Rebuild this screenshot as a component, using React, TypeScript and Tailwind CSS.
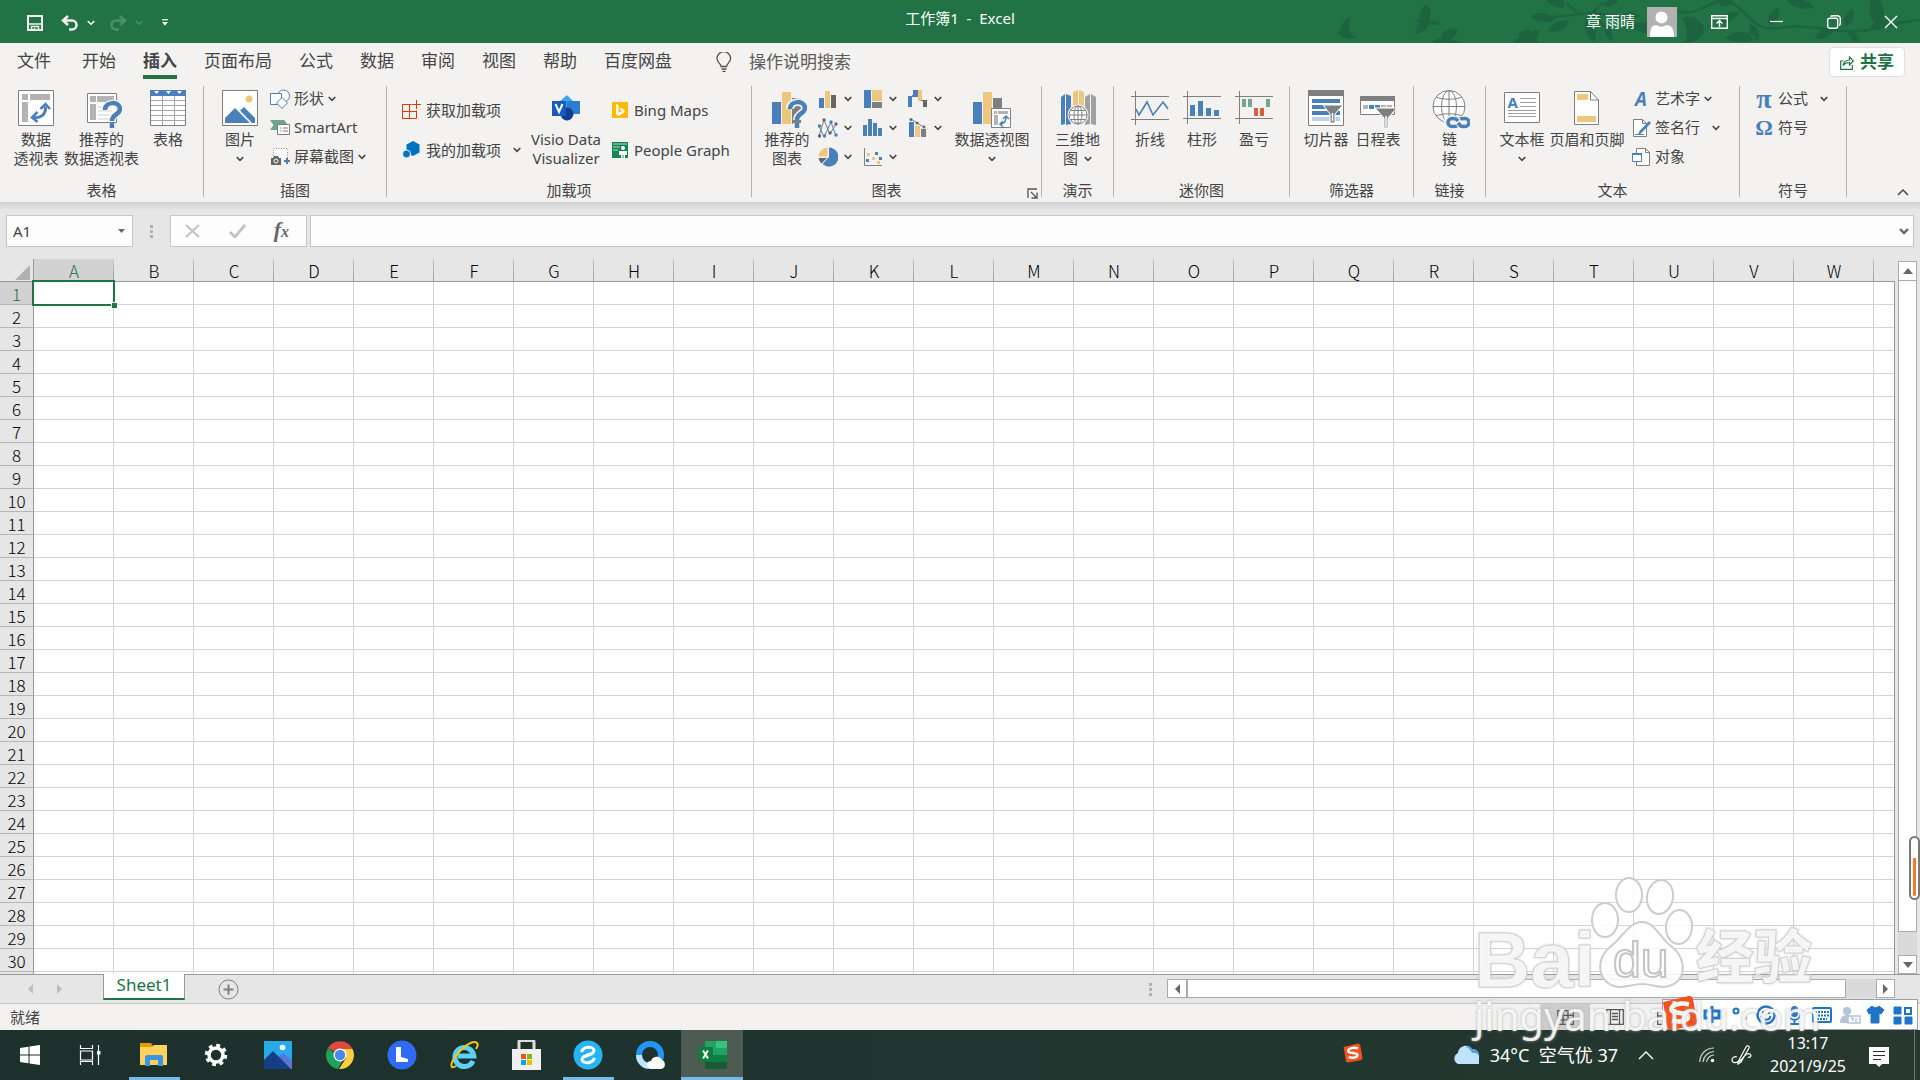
import type { ReactNode } from "react";

const BLUE = "#4a80b9";
const GOLD = "#edc77e";
const GRAY = "#7f7f7f";

const TABS = ["开始", "插入", "页面布局", "公式", "数据", "审阅", "视图", "帮助", "百度网盘"];
const COLUMNS = "ABCDEFGHIJKLMNOPQRSTUVW".split("");
const ROWS = Array.from({ length: 30 }, (_, i) => i + 1);

type IconProps = { w?: number; h?: number; children: ReactNode };

const Icon = ({ w = 20, h = 20, children }: IconProps) => (
  <svg width={w} height={h} viewBox={`0 0 ${w} ${h}`} fill="none" className="shrink-0" aria-hidden="true">
    {children}
  </svg>
);

const Big = ({ children }: { children: ReactNode }) => (
  <Icon w={40} h={40}>
    {children}
  </Icon>
);

const Chevron = () => (
  <Icon w={8} h={6}>
    <path d="M0.7 1 4 4.3 7.3 1" stroke="#444" strokeWidth="1.6" />
  </Icon>
);

const BigButton = ({
  icon,
  lines,
  chevron,
  className,
}: {
  icon: ReactNode;
  lines: string[];
  chevron?: "below" | "inline";
  className: string;
}) => (
  <button className={`flex flex-col items-center shrink-0 pt-1.5 leading-[19px] whitespace-nowrap ${className}`}>
    {icon}
    {lines.map((line, i) => (
      <span key={line} className="flex items-center gap-1.5">
        {line}
        {chevron === "inline" && i === lines.length - 1 && <Chevron />}
      </span>
    ))}
    {chevron === "below" && (
      <span className="flex items-center h-[19px]">
        <Chevron />
      </span>
    )}
  </button>
);

const SmallButton = ({
  icon,
  label,
  chevron,
  className = "h-[29px] gap-1",
}: {
  icon: ReactNode;
  label: string;
  chevron?: "near" | "far";
  className?: string;
}) => (
  <button className={`flex items-center shrink-0 whitespace-nowrap ${className}`}>
    {icon}
    <span>{label}</span>
    {chevron === "near" && <Chevron />}
    {chevron === "far" && (
      <span className="pl-2">
        <Chevron />
      </span>
    )}
  </button>
);

const Group = ({
  title,
  className,
  launcher,
  children,
}: {
  title: string;
  className: string;
  launcher?: boolean;
  children: ReactNode;
}) => (
  <>
    <section className={`flex flex-col shrink-0 ${className}`} aria-label={title}>
      <div className="flex h-[95px]">{children}</div>
      <div className="flex items-center h-[22px]">
        <span className="flex-1 text-center">{title}</span>
        {launcher && (
          <button className="w-5 pl-1.5 pt-1.5" aria-label="图表选项">
            <Icon w={11} h={11}>
              <path d="M1 10V1h9M4 4l5 5M10 4.5V10H4.5" stroke="#555" strokeWidth="1.3" />
            </Icon>
          </button>
        )}
      </div>
    </section>
    <div className="w-px h-[111px] mt-0.5 shrink-0 bg-[#b3b0ad]" />
  </>
);

/* ---------- ribbon icons ---------- */

const PivotIcon = () => (
  <Big>
    <path d="M2.500 .5h35v35h-35z" fill="#fff" stroke={GRAY} />
    <path d="M6 4h6v6H6zM14 4h20v6H14zM6 12h6v20H6z" fill="#b3b3b3" />
    <path d="M17 27.500c8 1 13-3 12.500-11" stroke={BLUE} strokeWidth="3" />
    <path d="m21.500 22-5.500 5.500 5.500 4.500M24.500 19l5-5 4.500 5" stroke={BLUE} strokeWidth="2.500" />
  </Big>
);

const RecommendedPivotIcon = () => (
  <Big>
    <path d="M5.500 3.500h29v29h-29z" fill="#fff" stroke={GRAY} />
    <path d="M8 6h6v6H8zM15 6h17v6H15zM8 14h6v16H8z" fill="#b3b3b3" />
    <path d="M16 17h14M16 21h14M16 25h14M16 29h14" stroke="#d0d0d0" />
    <path d="M23 20c0-9 15-9 15-1 0 6-8 5-8 12M30 34v5" stroke="#f3f2f1" strokeWidth="7" />
    <path d="M23 20c0-9 15-9 15-1 0 6-8 5-8 12M30 33v5" stroke={BLUE} strokeWidth="4.500" />
  </Big>
);

const TableIcon = () => (
  <Big>
    <path d="M2.500 .5h35v35h-35z" fill="#fff" stroke={GRAY} />
    <path d="M2 0h36v6H2z" fill={BLUE} />
    <path d="M6 1h5l-2.500 3zM18 1h5l-2.500 3zM29 1h5l-2.500 3z" fill="#fff" />
    <path d="M14.500 6v29M26.500 6v29M3 10.500h34M3 15.500h34M3 20.500h34M3 25.500h34M3 30.500h34" stroke="#a6a6a6" />
  </Big>
);

const PictureIcon = () => (
  <Big>
    <path d="M2.500 .5h35v35h-35z" fill="#fff" stroke={GRAY} />
    <circle cx="29" cy="9" r="3.500" fill={GOLD} />
    <path d="M5 33v-5l10-10 15 15zM20 20.500l4-3.500 11 11v5h-3z" fill={BLUE} />
  </Big>
);

const ShapesIcon = () => (
  <Icon>
    <circle cx="13.500" cy="7" r="6" fill="#fff" stroke={BLUE} />
    <path d="M.5 4.500h11v11H.5z" fill="#fff" stroke={BLUE} />
    <path d="m12 8.500 5.500 5.500-5.500 5.500L6.500 14z" fill="#fff" stroke={BLUE} />
  </Icon>
);

const SmartArtIcon = () => (
  <Icon>
    <path d="M0 2h14l4 5-3 5H0l3.500-5z" fill="#6ba58c" />
    <path d="M7.500 6.500h12v10h-12z" fill="#fff" stroke={GRAY} />
    <path d="M10 10h1.500M10 13h1.500M13 10h5M13 13h5" stroke={GRAY} />
  </Icon>
);

const ScreenshotIcon = () => (
  <Icon>
    <path d="M3.500 9V1.500h14V14" fill="#fff" stroke="#888" strokeDasharray="1 1.500" />
    <path d="M1 11h2l1-2h4l1 2h2v7H1z" fill="#666" />
    <circle cx="6" cy="14" r="2" fill="#666" stroke="#fff" />
    <path d="M17 11v6M14 14h6" stroke={BLUE} strokeWidth="2" />
  </Icon>
);

const GetAddinsIcon = () => (
  <Icon>
    <path d="M.5 4.500h7v14h-7zM.5 11.500h14v7H.5zM7.500 18.500v-14h2M14.500 11.500v-1M7.500 11.500h7" stroke="#d83b01" />
    <path d="M14.500 0v9M10 4.500h9" stroke="#d83b01" />
  </Icon>
);

const MyAddinsIcon = () => (
  <Icon>
    <path d="m11 1 6.500 3.500v8L11 16l-6.500-3.500V4.500z" fill="#0072c6" />
    <circle cx="4.500" cy="14" r="4" fill="#0072c6" stroke="#f3f2f1" />
  </Icon>
);

const VisioIcon = () => (
  <Big>
    <path d="m21 5 7 7-7 7-8-7z" fill="#41a5ee" />
    <path d="M21 11h13v13H21z" fill="#2b7cd3" />
    <circle cx="21" cy="24" r="6.500" fill="#103f91" />
    <path d="M6 11h14v15H6z" fill="#185abd" />
    <path d="m9.500 14 3.500 8 3.500-8" stroke="#fff" strokeWidth="2" />
  </Big>
);

const BingIcon = () => (
  <Icon w={16} h={16}>
    <path d="M0 0h16v16H0z" fill="#ffb900" />
    <path d="M4 2v10l2.500 2 6-3.500V7.500L7.500 5.500l1 3 1.500.5-3.500 2V3z" fill="#fff" />
  </Icon>
);

const PeopleGraphIcon = () => (
  <Icon w={16} h={16}>
    <path d="M0 0h16v16H0z" fill="#13864f" />
    <path d="M1 2h14M1 5h7M1 8h5" stroke="#b9dccb" />
    <circle cx="11" cy="6" r="2" fill="#fff" />
    <path d="M7 9h8v4h-2v3h-1.500v-3h-1v3H9v-3H7z" fill="#fff" />
  </Icon>
);

const RecommendedChartIcon = () => (
  <Big>
    <path d="M5 12h9v22H5z" fill={BLUE} />
    <path d="M15 2h9v32h-9z" fill={GOLD} />
    <path d="M25 8h9v26h-9z" fill={GRAY} />
    <path d="M23 19c0-9 15-9 15-1 0 6-8 5-8 12M30 33v6" stroke="#f3f2f1" strokeWidth="8" />
    <path d="M23 19c0-9 15-9 15-1 0 6-8 5-8 12M30 33v5" stroke={BLUE} strokeWidth="4.500" />
  </Big>
);

const PivotChartIcon = () => (
  <Big>
    <path d="M1 12h9v22H1z" fill={BLUE} />
    <path d="M11 2h9v32h-9z" fill={GOLD} />
    <path d="M21 8h9v10h-9z" fill={GRAY} />
    <path d="M19.500 18.500h19v19h-19z" fill="#fff" stroke={GRAY} />
    <path d="M22 21h3v3h-3zM26 21h10v3H26zM22 25h4v10h-4z" fill="#b3b3b3" />
    <path d="M28 34c4 0 6-3 6-7M31 31l-3 3 3 3M31 29l3-3 3 3" stroke={BLUE} strokeWidth="1.500" />
  </Big>
);

const MINI_CHARTS: { name: string; art: ReactNode }[] = [
  {
    name: "柱形图",
    art: (
      <>
        <path d="M1 9h5v10H1z" fill={BLUE} />
        <path d="M7 2h5v17H7z" fill={GOLD} />
        <path d="M13 6h5v13h-5z" fill="#666" />
      </>
    ),
  },
  {
    name: "层次结构图",
    art: (
      <>
        <path d="M1 1h7v18H1z" fill={BLUE} />
        <path d="M9 1h10v11H9z" fill={GOLD} />
        <path d="M9 13h10v6H9z" fill={GRAY} />
      </>
    ),
  },
  {
    name: "瀑布图",
    art: (
      <>
        <path d="M0 7h4v11H0zM5 1h5v7H5zM4 6h2v2H4z" fill={BLUE} />
        <path d="M10 1h4v11h-4z" fill={GOLD} />
        <path d="M15 11h4v7h-4zM13 11h3v1h-3z" fill="#666" />
      </>
    ),
  },
  {
    name: "折线图",
    art: (
      <>
        <path d="M1 18 6 2l6 14 6-10" stroke={GRAY} />
        <path d="m1 8 5 11 7-15 5 14" stroke={BLUE} />
        <g fill="#666">
          <circle cx="1.500" cy="18" r="1.700" />
          <circle cx="6" cy="2" r="1.700" />
          <circle cx="12" cy="15" r="1.700" />
          <circle cx="18" cy="6" r="1.700" />
        </g>
        <g fill={BLUE}>
          <circle cx="1.500" cy="8" r="1.700" />
          <circle cx="6.500" cy="18" r="1.700" />
          <circle cx="13" cy="4" r="1.700" />
          <circle cx="18" cy="17" r="1.700" />
        </g>
      </>
    ),
  },
  { name: "直方图", art: <path d="M0 7h4v11H0zM5 1h4v17H5zM10 5h4v13h-4zM15 10h4v8h-4z" fill={BLUE} /> },
  {
    name: "组合图",
    art: (
      <>
        <path d="M1 4h5v15H1z" fill={BLUE} />
        <path d="M7 8h5v11H7z" fill={GOLD} />
        <path d="M13 11h5v8h-5z" fill={GRAY} />
        <path d="m3 1 6 4 7 4" stroke={GRAY} />
        <circle cx="3" cy="1.500" r="1.500" fill="#666" />
        <circle cx="9" cy="5" r="1.500" fill="#666" />
        <circle cx="16" cy="9" r="1.500" fill="#666" />
      </>
    ),
  },
  {
    name: "饼图",
    art: (
      <>
        <path d="M11 .5A9.500 9.500 0 1 1 4.500 17L11 10z" fill={BLUE} />
        <path d="M9.500 .5V9.500H.5A9.500 9.500 0 0 1 9.500 .5z" fill={GOLD} />
        <path d="M.5 11h8.500L3.500 16.500A9.500 9.500 0 0 1 .5 11z" fill="#666" />
      </>
    ),
  },
  {
    name: "散点图",
    art: (
      <>
        <path d="M1.500 1v17.500H19" stroke={GRAY} />
        <path d="M3 12h3v3H3zM12 5h3v3h-3zM16 10h3v3h-3z" fill={BLUE} />
        <path d="M4 6h3v3H4zM9 10h3v3H9zM14 14h3v3h-3z" fill={GOLD} />
      </>
    ),
  },
];

const Map3dIcon = () => (
  <Big>
    <path d="M3 7l4-3v30l-4 1zM8 4l5 2v28l-5 1z" fill={BLUE} />
    <path d="m15 2 5-2v16l-5 2zM21 0l5 2v16l-5-2z" fill={GOLD} />
    <path d="m27 7 5-3v30l-5 1zM33 4l5 3v28l-5-1z" fill="#a0a0a0" />
    <circle cx="20" cy="25" r="10.500" fill="#f3f2f1" />
    <circle cx="20" cy="25" r="9" fill="#fff" stroke={GRAY} />
    <ellipse cx="20" cy="25" rx="4" ry="9" stroke={GRAY} />
    <path d="M11 25h18M12.500 20.500h15M12.500 29.500h15M20 16v18" stroke={GRAY} />
  </Big>
);

const SparkLineIcon = () => (
  <Big>
    <path d="M1 6.500h38M1 29.500h38M5.500 1v34" stroke={GRAY} />
    <path d="m6 19 3 6 8-13 6 13 10-13 5 7" stroke={BLUE} strokeWidth="1.600" />
  </Big>
);

const SparkColumnIcon = () => (
  <Big>
    <path d="M1 6.500h38M1 28.500h38M5.500 1v33" stroke={GRAY} />
    <path d="M8 15h5v11H8zM16 11h5v15h-5zM24 18h5v8h-5zM32 20h5v6h-5z" fill={BLUE} />
  </Big>
);

const SparkWinLossIcon = () => (
  <Big>
    <path d="M1 6.500h38M1 28.500h38M5.500 1v33" stroke={GRAY} />
    <path d="M8 9h4v8H8zM14 9h4v8h-4zM32 9h4v8h-4z" fill="#72a794" />
    <path d="M20 18h4v8h-4zM26 18h4v8h-4z" fill="#d9603b" />
  </Big>
);

const SlicerIcon = () => (
  <Big>
    <path d="M2.500 .5h35v35h-35z" fill="#fff" stroke={GRAY} />
    <path d="M2 0h36v6H2z" fill={GRAY} />
    <path d="M6 9h28v4H6zM6 15h28v4H6zM6 21h28v4H6z" fill={BLUE} />
    <path d="M6 27h28v4H6z" fill="#bed3ea" />
    <path d="M17 15h20l-8 9v9h-5v-9z" fill={GRAY} stroke="#fff" />
    <path d="M26.500 23v8" stroke="#fff" strokeWidth="1.500" />
  </Big>
);

const TimelineIcon = () => (
  <Big>
    <path d="M2.500 6.500h34v18h-34z" fill="#fff" stroke={GRAY} />
    <path d="M2 6h35v5H2z" fill={GRAY} />
    <path d="M5 15h5v4H5zM23 15h5v2h-5zM29 15h5v2h-5z" fill="#b3b3b3" />
    <path d="M11 15h5v4h-5zM17 15h5v4h-5z" fill={BLUE} />
    <path d="M17 18h22l-9 10v10h-4V28z" fill={GRAY} stroke="#fff" />
    <path d="M28 26v11" stroke="#fff" strokeWidth="1.500" />
  </Big>
);

const LinkIcon = () => (
  <Big>
    <circle cx="19" cy="16.500" r="16" fill="#fff" stroke={GRAY} />
    <ellipse cx="19" cy="16.500" rx="7.500" ry="16" stroke={GRAY} />
    <path d="M3 16.500h32M19 .5v32M6 7c7 3 19 3 26 0M6 26c7-3 19-3 26 0" stroke={GRAY} />
    <path d="M20 26h16a6 6 0 0 1 0 13H20a6 6 0 0 1 0-13z" fill="#f3f2f1" />
    <path
      d="M27 36c-1 .5-3 .5-5 .5a4 4 0 0 1 0-8c4 0 4 0 6 2.500M30 29c1-.5 3-.5 5-.5a4 4 0 0 1 0 8c-4 0-4 0-7-3.500"
      stroke={BLUE}
      strokeWidth="3.500"
    />
  </Big>
);

const TextBoxIcon = () => (
  <Big>
    <path d="M2.500 2.500h35v30h-35z" fill="#fff" stroke={GRAY} />
    <text x="5.500" y="18" fontSize="15" fontWeight="700" fill={BLUE}>
      A
    </text>
    <path d="M18 8.500h16M18 12.500h16M18 16.500h16M6 20.500h28M6 23.500h28M6 26.500h28" stroke="#a0a0a0" />
  </Big>
);

const HeaderFooterIcon = () => (
  <Big>
    <path d="M7.500 1.500h16l8 8.500v24.500h-24z" fill="#fff" stroke={GRAY} />
    <path d="M23.500 1.500V10h8" stroke={GRAY} />
    <path d="M10 4h11v6H10zM10 26h19v6H10z" fill={GOLD} />
  </Big>
);

const SignatureIcon = () => (
  <Icon>
    <path d="M2.500 1.500h9l4 4v13h-13z" fill="#fff" stroke={GRAY} />
    <path d="M11.500 1.500v4h4" stroke={GRAY} />
    <path d="m7 17 1.500-4L18 3l2 2-9.500 10z" fill={BLUE} />
    <path d="M4 16.500h9" stroke={BLUE} />
  </Icon>
);

const ObjectIcon = () => (
  <Icon>
    <path d="M5.500 1.500h9l4 4v13h-13z" fill="#fff" stroke={GRAY} />
    <path d="M14.500 1.500v4h4" stroke={GRAY} />
    <path d="M1.500 6.500h9v8h-9z" fill="#fff" stroke={BLUE} />
    <path d="M1 7h10" stroke={BLUE} strokeWidth="2" />
  </Icon>
);

const Glyph = ({ char, className }: { char: string; className: string }) => (
  <span className={`text-center text-[#4a80b9] font-bold leading-5 shrink-0 ${className}`} aria-hidden="true">
    {char}
  </span>
);

/* ---------- window parts ---------- */

const TitleArt = () => (
  <svg width="590" height="43" viewBox="0 0 590 43" className="absolute top-0 right-0" fill="#1e633f" aria-hidden="true">
    <path d="M7 33c4 0 4-13 14-16-3 7-2 15 1 18l5 1-2 2-7 1-5-2z" />
    <path d="M84 19l6 1c-1-8 3-16 7-15 4 3 4 10 3 16l9 1v3l-10-1c-3 7-8 9-14 10 1-6 3-9 4-11z" />
    <path d="M102 41l9-3c0-6 7-10 17-9-1 6-6 8-7 11l8 2v1h-24zM184 40l8-3 6 6h-12z" />
    <path d="M189 33c5-5 10-4 13-1 2-3 6-3 8 0l-2 5 -2 2 2 4h-19z" />
    <path d="M212 16c15 3 30-2 46-3s28 5 48 4M250 15l-14-12M262 13l10-10M262 13l18 20" stroke="#1e633f" fill="none" strokeWidth="2" />
    <path d="M200 17c8-6 18-4 26 1-7 7-19 4-26-1zM234 8c-8 0-16-4-18-8h18zM238 20c0 9-9 12-20 12 1-8 9-11 20-12zM256 15c10 5 12 16 8 27-8-6-11-15-8-27zM272 5c4-5 9-6 16-5-3 6-9 8-16 5zM290 16c7-5 14-5 20 0-7 5-14 5-20 0zM275 24c6 2 8 8 7 17-6-4-9-9-7-17zM300 26c10-6 24-6 30 4-10 5-22 4-30-4z" />
    <path d="M345 10c10 5 20 2 32-4s20-8 32 2c14 12 16 22 40 20 40-6 60 10 100 0 20-5 30-8 41-8" stroke="#1e633f" fill="none" strokeWidth="2.500" />
    <path d="M352 18c12-4 24 4 22 14-4 8-12 11-20 11 5-8 4-16-2-25zM385 0h18c-4 8-10 9-18 0zM408 12c-4 10-12 12-20 10 4-8 11-11 20-10zM420 24c-2 9 0 14 8 17 3-8 0-14-8-17zM440 26c-4-9 0-14 8-18 3 8 0 14-8 18zM395 38c10-8 24-7 32 0-10 6-22 5-32 0zM505 28c-10-2-17 2-20 11 9 1 16-3 20-11zM515 27c-3-8 0-14 8-18 3 8 0 14-8 18zM518 29c7 1 11 6 11 14-8-2-12-7-11-14zM540 28c5-9 14-11 20-9-3 8-11 11-20 9zM548 26c-9-6-10-15-7-26h9c6 10 5 18-2 26zM456 0c8 8 16 10 28 8-4-7-12-9-18-8z" />
  </svg>
);

const TitleBar = () => (
  <header className="relative flex items-center h-[43px] shrink-0 bg-[#217346] text-white overflow-hidden">
    <TitleArt />
    <div className="relative flex items-center flex-1 pt-0.5">
      <button className="ml-[27px]" aria-label="保存">
        <Icon w={16} h={16}>
          <path d="M1 1h14v14H1z" stroke="#f3f2f1" strokeWidth="2" />
          <path d="M2 9h12M4.500 16v-4.500h7V16M7.500 13v3" stroke="#f3f2f1" strokeWidth="1.500" />
        </Icon>
      </button>
      <button className="ml-4.5" aria-label="撤消">
        <Icon w={18} h={16}>
          <path d="M2 5.500h9a4.500 4.500 0 0 1 0 9H8M7 1 2 5.500 7 10" stroke="#f3f2f1" strokeWidth="2.500" />
        </Icon>
      </button>
      <button className="ml-2" aria-label="撤消列表">
        <Icon w={8} h={6}>
          <path d="M.7 1 4 4.300 7.300 1" stroke="#fff" strokeWidth="1.500" />
        </Icon>
      </button>
      <button className="ml-3.5" aria-label="恢复">
        <Icon w={18} h={16}>
          <path d="M16 5.500H7a4.500 4.500 0 0 0 0 9h3M11 1l5 4.500L11 10" stroke="#4d9069" strokeWidth="2.500" />
        </Icon>
      </button>
      <button className="ml-2" aria-label="恢复列表">
        <Icon w={8} h={6}>
          <path d="M.7 1 4 4.300 7.300 1" stroke="#4d9069" strokeWidth="1.500" />
        </Icon>
      </button>
      <button className="ml-[19px]" aria-label="自定义快速访问工具栏">
        <Icon w={6} h={7}>
          <path d="M0 .7h6" stroke="#fff" strokeWidth="1.200" />
          <path d="M0 3h6L3 6.500z" fill="#fff" />
        </Icon>
      </button>
    </div>
    <h1 className="relative pb-1.5 whitespace-pre">工作簿1  -  Excel</h1>
    <div className="relative flex items-center justify-end flex-1">
      <span className="mr-3">章 雨晴</span>
      <button className="mr-[13px]" aria-label="账户">
        <Icon w={30} h={30}>
          <path d="M0 0h30v30H0z" fill="#b1b1b1" />
          <circle cx="14.500" cy="10.500" r="6" fill="#fff" />
          <path d="M3 30c0-9 2-12 7-12 2 2 7 2 9 0 6 0 8 4 8 12z" fill="#fff" />
        </Icon>
      </button>
      <button className="flex justify-center w-[58px]" aria-label="功能区显示选项">
        <Icon w={17} h={14}>
          <path d="M.7 .7h15.600v12.600H.7zM1 3.500h15M8.500 12V6M5.500 8.500l3-3 3 3" stroke="#fff" strokeWidth="1.400" />
        </Icon>
      </button>
      <button className="flex justify-center w-[57px]" aria-label="最小化">
        <Icon w={13} h={14}>
          <path d="M0 6.500h13" stroke="#fff" strokeWidth="1.200" />
        </Icon>
      </button>
      <button className="flex justify-center w-[57px]" aria-label="向下还原">
        <Icon w={14} h={14}>
          <rect x=".7" y="3.200" width="10" height="10" rx="2" stroke="#fff" strokeWidth="1.400" />
          <path d="M3.500 1.500C4 1 5 .7 6 .7h4A3.300 3.300 0 0 1 13.300 4v4c0 1-.3 2-1 2.500" stroke="#fff" strokeWidth="1.400" />
        </Icon>
      </button>
      <button className="flex justify-center w-[58px]" aria-label="关闭">
        <Icon w={14} h={14}>
          <path d="m1 1 12 12M13 1 1 13" stroke="#fff" strokeWidth="1.400" />
        </Icon>
      </button>
    </div>
  </header>
);

const TabRow = () => (
  <nav className="flex h-[41px] pl-[17px] pr-[15px] text-[17px]">
    <button className="h-9 mr-[31px]">文件</button>
    <div className="flex gap-[27px]">
      {TABS.map((tab) => (
        <button
          key={tab}
          className={`h-9 pt-1 border-b-4 leading-7 whitespace-nowrap ${
            tab === "插入" ? "border-[#217346] font-bold" : "border-transparent"
          }`}
        >
          {tab}
        </button>
      ))}
    </div>
    <label className="flex items-center h-[38px] ml-11 gap-[17px]">
      <Icon w={16} h={20}>
        <path d="M5 14.500c0-3-4-4-4-8a6.800 6.800 0 0 1 13.600 0c0 4-4 5-4 8zM5.500 17h5M6.500 19.300h3" stroke="#555" strokeWidth="1.300" />
      </Icon>
      <input className="w-48 bg-transparent outline-none placeholder:text-[#5c5a58]" placeholder="操作说明搜索" aria-label="操作说明搜索" />
    </label>
    <button className="flex items-center justify-center gap-1.5 w-[76px] h-[30px] mt-1 ml-auto bg-white border border-[#e1dfdd] rounded text-[#217346] font-bold">
      <Icon w={14} h={15}>
        <path d="M3.500 6H.7v8.300h11.600V10M3 10.500c.5-3 2.500-5.500 6.500-5.500V2l4 4-4 4V7.500C6 7.500 4.500 8.500 3 10.500z" stroke="#217346" strokeWidth="1.200" />
      </Icon>
      共享
    </button>
  </nav>
);

const Ribbon = () => (
  <div className="flex h-[118px] overflow-hidden">
    <Group title="表格" className="w-[203px]">
      <BigButton className="ml-2 w-14" icon={<PivotIcon />} lines={["数据", "透视表"]} />
      <BigButton className="w-[75px]" icon={<RecommendedPivotIcon />} lines={["推荐的", "数据透视表"]} />
      <BigButton className="w-[58px]" icon={<TableIcon />} lines={["表格"]} />
    </Group>
    <Group title="插图" className="w-[182px]">
      <BigButton className="ml-1.5 w-[60px]" icon={<PictureIcon />} lines={["图片"]} chevron="below" />
      <div className="flex flex-col items-start">
        <SmallButton icon={<ShapesIcon />} label="形状" chevron="near" />
        <SmallButton icon={<SmartArtIcon />} label="SmartArt" />
        <SmallButton icon={<ScreenshotIcon />} label="屏幕截图" chevron="near" />
      </div>
    </Group>
    <Group title="加载项" className="w-[364px]">
      <div className="flex flex-col items-start w-[141px] pl-[15px] pt-1.5">
        <SmallButton className="h-10 gap-1" icon={<GetAddinsIcon />} label="获取加载项" />
        <SmallButton className="h-10 gap-1" icon={<MyAddinsIcon />} label="我的加载项" chevron="far" />
      </div>
      <BigButton className="w-[76px]" icon={<VisioIcon />} lines={["Visio Data", "Visualizer"]} />
      <div className="flex flex-col items-start pl-2 pt-1.5">
        <SmallButton className="h-10 gap-1.5" icon={<BingIcon />} label="Bing Maps" />
        <SmallButton className="h-10 gap-1.5" icon={<PeopleGraphIcon />} label="People Graph" />
      </div>
    </Group>
    <Group title="图表" className="w-[289px]" launcher>
      <BigButton className="ml-2 w-[54px]" icon={<RecommendedChartIcon />} lines={["推荐的", "图表"]} />
      <div className="grid grid-cols-3 content-start w-[139px] pl-1">
        {MINI_CHARTS.map(({ name, art }) => (
          <button key={name} className="flex items-center gap-1.5 h-[29px]" aria-label={name}>
            <Icon>{art}</Icon>
            <Chevron />
          </button>
        ))}
      </div>
      <BigButton className="w-[78px]" icon={<PivotChartIcon />} lines={["数据透视图"]} chevron="below" />
    </Group>
    <Group title="演示" className="w-[71px]">
      <BigButton className="w-full" icon={<Map3dIcon />} lines={["三维地", "图"]} chevron="inline" />
    </Group>
    <Group title="迷你图" className="w-[175px]">
      <BigButton className="ml-2.5 w-[52px]" icon={<SparkLineIcon />} lines={["折线"]} />
      <BigButton className="w-[52px]" icon={<SparkColumnIcon />} lines={["柱形"]} />
      <BigButton className="w-[52px]" icon={<SparkWinLossIcon />} lines={["盈亏"]} />
    </Group>
    <Group title="筛选器" className="w-[123px]">
      <BigButton className="ml-2.5 w-[52px]" icon={<SlicerIcon />} lines={["切片器"]} />
      <BigButton className="w-[52px]" icon={<TimelineIcon />} lines={["日程表"]} />
    </Group>
    <Group title="链接" className="w-[71px]">
      <BigButton className="w-full" icon={<LinkIcon />} lines={["链", "接"]} />
    </Group>
    <Group title="文本" className="w-[253px]">
      <BigButton className="ml-2.5 w-[52px]" icon={<TextBoxIcon />} lines={["文本框"]} chevron="below" />
      <BigButton className="w-[78px]" icon={<HeaderFooterIcon />} lines={["页眉和页脚"]} />
      <div className="flex flex-col items-start pl-[5px]">
        <SmallButton icon={<Glyph char="A" className="w-5 italic text-[19px]" />} label="艺术字" chevron="near" />
        <SmallButton icon={<SignatureIcon />} label="签名行" chevron="far" />
        <SmallButton icon={<ObjectIcon />} label="对象" />
      </div>
    </Group>
    <Group title="符号" className="w-[106px]">
      <div className="flex flex-col items-start pl-3.5">
        <SmallButton
          icon={<Glyph char="π" className="w-5 text-[28px] font-['Liberation_Serif',serif]" />}
          label="公式"
          chevron="far"
        />
        <SmallButton
          icon={<Glyph char="Ω" className="w-5 text-[22px] font-['Liberation_Serif',serif]" />}
          label="符号"
        />
      </div>
    </Group>
    <button className="self-end ml-auto mr-[11px] mb-1.5" aria-label="折叠功能区">
      <Icon w={12} h={7}>
        <path d="m1 6 5-5 5 5" stroke="#444" strokeWidth="1.500" />
      </Icon>
    </button>
  </div>
);

const Dots = () => (
  <Icon w={3} h={13}>
    <path d="M0 0h3v3H0zM0 5h3v3H0zM0 10h3v3H0z" fill="#b0b0b0" />
  </Icon>
);

const FormulaBar = () => (
  <div className="flex items-start shrink-0 h-[53px] px-1.5 pt-[13px] bg-linear-to-b from-[#cfcfcf] via-[#e6e6e6] via-15% to-[#e6e6e6]">
    <div className="flex items-center w-[127px] h-8 px-1.5 bg-[#fdfdfd] border border-[#c6c6c6]">
      <input className="w-full min-w-0 bg-transparent outline-none" defaultValue="A1" aria-label="名称框" />
      <Icon w={8} h={5}>
        <path d="M0 0h7L3.500 4z" fill="#666" />
      </Icon>
    </div>
    <div className="flex items-center h-8 px-[17px]">
      <Dots />
    </div>
    <div className="flex items-center justify-between w-[137px] h-8 pl-3.5 pr-[17px] bg-[#fdfdfd] border border-[#c6c6c6]">
      <button aria-label="取消">
        <Icon w={16} h={14}>
          <path d="m1 1 13 12M14 1 1 13" stroke="#c2c2c2" strokeWidth="2" />
        </Icon>
      </button>
      <button aria-label="输入">
        <Icon w={17} h={14}>
          <path d="m1 8 5 5L16 1" stroke="#c2c2c2" strokeWidth="2.800" />
        </Icon>
      </button>
      <button className="text-[22px] leading-6 italic font-bold text-[#666] font-['Liberation_Serif',serif]" aria-label="插入函数">
        f<span className="text-base">x</span>
      </button>
    </div>
    <div className="flex items-center flex-1 h-8 ml-[3px] pl-2 pr-1 bg-[#fdfdfd] border border-[#c6c6c6]">
      <input className="flex-1 bg-transparent outline-none" aria-label="编辑栏" />
      <button aria-label="展开编辑栏">
        <Icon w={10} h={7}>
          <path d="m1 1 4 4 4-4" stroke="#666" strokeWidth="2.400" />
        </Icon>
      </button>
    </div>
  </div>
);

const Sheet = () => (
  <main className="flex flex-1 min-h-0 bg-[#e6e6e6]">
    <div className="flex-1 min-w-0 pt-1 overflow-hidden">
      <table className="table-fixed w-full h-[calc(100%+21px)] bg-white border-separate border-spacing-0 text-[17px] font-light font-['Noto_Sans_CJK_SC',sans-serif] text-black">
        <colgroup>
          <col className="w-[34px]" />
          {COLUMNS.map((c) => (
            <col key={c} className="w-20" />
          ))}
          <col />
        </colgroup>
        <thead>
          <tr className="h-[23px]">
            <th className="p-0 bg-[#e6e6e6] border-b border-r border-[#999]" aria-label="全选">
              <svg width="15" height="15" viewBox="0 0 15 15" className="ml-[15px] mt-1">
                <path d="M15 0v15H0z" fill="#b1b1b1" />
              </svg>
            </th>
            {COLUMNS.map((c) => (
              <th
                key={c}
                className={`p-0 pt-0.5 h-[23px] leading-5 font-light border-b border-[#999] bg-[linear-gradient(to_bottom,#c9c9c9,#999)] bg-[length:1px_100%] bg-right bg-no-repeat ${
                  c === "A" ? "bg-[#d2d2d2] text-[#217346]" : "bg-[#e6e6e6]"
                }`}
              >
                {c}
              </th>
            ))}
            <th className="p-0 bg-[#e6e6e6] border-b border-[#999]" aria-hidden="true" />
          </tr>
        </thead>
        <tbody>
          {ROWS.map((r) => (
            <tr key={r} className="h-[23px]">
              <th
                className={`p-0 pt-0.5 h-[23px] leading-5 font-light border-r border-b border-r-[#999] border-b-[#b5b5b5] ${
                  r === 1 ? "bg-[#d2d2d2] text-[#217346]" : "bg-[#e6e6e6]"
                }`}
              >
                {r}
              </th>
              {COLUMNS.map((c) => (
                <td key={c} className="relative p-0 border-r border-b border-[#d4d4d4]">
                  {r === 1 && c === "A" && (
                    <div className="absolute -inset-0.5 z-10 border-2 border-[#217346]">
                      <div className="absolute -right-1 -bottom-1 size-1.5 bg-[#217346] border-t border-l border-white" />
                    </div>
                  )}
                </td>
              ))}
              <td className="p-0 border-b border-[#d4d4d4]" />
            </tr>
          ))}
          {/* filler row takes whatever height is left */}
          <tr>
            <th className="p-0 bg-[#e6e6e6] border-r border-[#999]" aria-hidden="true" />
            {COLUMNS.map((c) => (
              <td key={c} className="p-0 border-r border-[#d4d4d4]" />
            ))}
            <td />
          </tr>
        </tbody>
      </table>
    </div>
    <div className="w-px mt-[26px] bg-[#999]" />
    <div className="flex flex-col w-[19px] ml-[3px] mr-[3px] mt-1.5">
      <button className="flex items-center justify-center h-5 bg-white border border-[#ababab]" aria-label="向上滚动">
        <Icon w={10} h={6}>
          <path d="m5 0 5 6H0z" fill="#666" />
        </Icon>
      </button>
      <div className="flex flex-col flex-1 bg-[#dadada]">
        <div className="flex-1 -mt-px mb-[23px] bg-white border border-[#ababab]" />
      </div>
      <button className="flex items-center justify-center h-[19px] bg-white border border-[#ababab]" aria-label="向下滚动">
        <Icon w={10} h={6}>
          <path d="m0 0h10L5 6z" fill="#666" />
        </Icon>
      </button>
    </div>
  </main>
);

const SheetTabs = () => (
  <div className="flex shrink-0 h-[30px] bg-[#e6e6e6] border-t border-t-[#999] border-b border-b-[#c6c6c6]">
    <div className="flex items-center gap-6 w-[103px] pl-7">
      <Icon w={5} h={10}>
        <path d="M5 0v10L0 5z" fill="#bdbdbd" />
      </Icon>
      <Icon w={5} h={10}>
        <path d="M0 0v10l5-5z" fill="#bdbdbd" />
      </Icon>
    </div>
    <button className="w-[82px] h-[26px] -mt-px pb-0.5 leading-5 bg-white border-x border-x-[#999] border-b-2 border-b-[#217346] text-[17px] text-[#217346]">
      Sheet1
    </button>
    <button className="self-center ml-[33px]" aria-label="新工作表">
      <Icon w={21} h={21}>
        <circle cx="10.500" cy="10.500" r="9.500" stroke={GRAY} />
        <path d="M10.500 5.500v10M5.500 10.500h10" stroke={GRAY} strokeWidth="2" />
      </Icon>
    </button>
    <div className="flex items-center ml-auto pr-[15px]">
      <Dots />
    </div>
    <div className="flex w-[728px] h-[19px] mt-1 mr-[25px] bg-[#dadada]">
      <button className="flex items-center justify-center w-5 bg-white border border-[#ababab]" aria-label="向左滚动">
        <Icon w={5} h={10}>
          <path d="M5 0v10L0 5z" fill="#666" />
        </Icon>
      </button>
      <div className="flex-1 mr-[30px] bg-white border border-[#ababab]" />
      <button className="flex items-center justify-center w-[19px] bg-white border border-[#ababab]" aria-label="向右滚动">
        <Icon w={5} h={10}>
          <path d="M0 0v10l5-5z" fill="#666" />
        </Icon>
      </button>
    </div>
  </div>
);

const StatusBar = () => (
  <div className="flex items-center shrink-0 h-[26px] pl-2.5 pr-[230px] bg-[#f3f2f1]">
    <span>就绪</span>
    <button className="flex items-center justify-center w-[50px] h-full ml-auto bg-[#cfcdcb]" aria-label="普通">
      <Icon w={17} h={15}>
        <path d="M.7 .7h15.600v13.600H.7zM6 1v13M11 1v13M1 5.300h15M1 9.800h15" stroke="#555" strokeWidth="1.300" />
      </Icon>
    </button>
    <button className="flex items-center justify-center w-[50px] h-full" aria-label="页面布局">
      <Icon w={18} h={16}>
        <path d="M.7 .7h16.600v14.600H.7zM4.500 1v14M13.500 1v14M6 4.500h6M6 7.500h6M6 10.500h6" stroke="#555" strokeWidth="1.300" />
      </Icon>
    </button>
    <button className="flex items-center justify-center w-[50px] h-full" aria-label="分页预览">
      <Icon w={17} h={15}>
        <path d="M.7 .7h15.600v13.600H.7zM6 1v5H1M11 14V9h5" stroke="#555" strokeWidth="1.300" />
      </Icon>
    </button>
  </div>
);

/* ---------- things floating over the window ---------- */

const SogouLogo = ({ size }: { size: number }) => (
  <svg width={size} height={size} viewBox="0 0 36 36" className="shrink-0" aria-hidden="true">
    <path d="M1 7 27 1q3 0 4 3l4 22q0 4-4 5L9 35q-4 0-4-4z" fill="#f4511e" />
    <path d="M27 9.500C20 7.500 9 9 9.500 14.500c.5 5 16 2 16.500 7 .5 4.500-9 6-16 4" fill="none" stroke="#fff" strokeWidth="4.500" />
  </svg>
);

const ImeBar = () => (
  <div className="absolute right-0.5 bottom-[50px] flex items-center w-[256px] h-[31px] bg-white border border-[#9aa0a6] text-[#1f74c9]">
    <div className="-ml-px -mt-1">
      <SogouLogo size={36} />
    </div>
    <svg width="214" height="24" viewBox="0 0 214 24" className="shrink-0 ml-1" fill="none" stroke="#1f74c9" aria-hidden="true">
      <path d="M3 8h14v7H3zM10 3v17" strokeWidth="3" />
      <circle cx="34" cy="8" r="2.500" strokeWidth="2" />
      <path d="M43 13c1 2 0 4-2 5" strokeWidth="2.500" />
      <circle cx="64" cy="12" r="8.500" strokeWidth="2.500" />
      <path d="M59.500 13c1 5 8 5 9 0M61 8v3M67 8v3" strokeWidth="2" />
      <rect x="89" y="3" width="7" height="11" rx="3.500" fill="#1f74c9" stroke="none" />
      <path d="M86.500 10c0 9 12 9 12 0M92.500 17v4M88 21h9" strokeWidth="1.800" />
      <rect x="111" y="5" width="18" height="14" rx="1" strokeWidth="2" />
      <path d="M113 9h14M113 12.500h14M115 16h10" strokeWidth="2" strokeDasharray="2 1" />
      <circle cx="145" cy="8" r="4" fill="#b3c3dc" stroke="none" />
      <path d="M138 20c0-6 3-8 7-8s6 2 6 3v5z" fill="#b3c3dc" stroke="none" />
      <path d="M146 13h12v7h-12zM149 15h2v3M154 15v4" fill="#fff" stroke="#b3c3dc" strokeWidth="1.500" />
      <path d="m165 7 5-4c2 2 5 2 7 0l5 4-3 4-2-1v10h-8V10l-2 1z" fill="#1f74c9" />
      <path d="M192 4h7v7h-7zM192 14h7v7h-7zM203 14h7v7h-7z" fill="#1f74c9" />
      <path d="M203 5h6v6h-6z" strokeWidth="2" />
    </svg>
  </div>
);

const Watermark = () => (
  <div className="absolute right-[100px] bottom-[38px] w-[346px] font-['Liberation_Sans','Noto_Sans_CJK_SC',sans-serif] text-white/85 pointer-events-none">
    <div className="flex items-end h-[112px]">
      <span className="w-[122px] text-[78px] leading-[60px] font-bold [-webkit-text-stroke:1px_#d2d2d2] [text-shadow:0_0_3px_#bbb]">
        Bai
      </span>
      <svg
        width="92"
        height="112"
        viewBox="0 0 92 112"
        className="shrink-0 overflow-visible"
        fill="#fff"
        fillOpacity=".85"
        stroke="#cdcdcd"
        strokeWidth="2"
      >
        <ellipse cx="9" cy="42" rx="13" ry="17" />
        <ellipse cx="33" cy="17" rx="13" ry="17" />
        <ellipse cx="64" cy="19" rx="13" ry="17" transform="rotate(10 64 19)" />
        <ellipse cx="83" cy="49" rx="13" ry="17" transform="rotate(4 83 49)" />
        <path d="M46 44c13 0 18 16 30 25 16 12 15 38-8 40-9 0-13-3-22-3s-14 3-23 3C2 107-2 82 14 69c12-9 19-25 32-25z" />
        <text x="17" y="99" fontSize="50" stroke="#c4c4c4">
          du
        </text>
      </svg>
      <span className="ml-2 text-[58px] leading-[64px] font-black [-webkit-text-stroke:1px_#d2d2d2] [text-shadow:0_0_3px_#bbb]">
        经验
      </span>
    </div>
    <div className="text-[40px] leading-[52px] whitespace-nowrap font-['Noto_Sans',sans-serif] [text-shadow:0_0_3px_#aaa]">
      jingyan.baidu.com
    </div>
  </div>
);

const Gauge = () => (
  <div className="absolute right-0 bottom-[180px] flex flex-col justify-end w-[11px] h-16 p-0.5 bg-white border-2 border-[#777] rounded-full">
    <div className="h-[38px] bg-[#f97a26] rounded-b-full" />
  </div>
);

/* ---------- taskbar ---------- */

const TASKS: { name: string; state?: "open" | "active"; art: ReactNode }[] = [
  {
    name: "文件资源管理器",
    state: "open",
    art: (
      <>
        <path d="M1 3h11l2 3h14v5H1z" fill="#e09f00" />
        <path d="M1 7h12l2-2h13v20H1z" fill="#ffd25e" />
        <path d="M6 26v-9q0-2 2-2h14q2 0 2 2v9h-5v-6h-8v6z" fill="#3b95dc" />
      </>
    ),
  },
  {
    name: "设置",
    art: (
      <>
        <circle cx="15" cy="15" r="7" stroke="#fff" strokeWidth="3.500" />
        <circle cx="15" cy="15" r="9.500" stroke="#fff" strokeWidth="3.500" strokeDasharray="3.730 3.730" />
      </>
    ),
  },
  {
    name: "照片",
    art: (
      <>
        <path d="M1 1h28v28H1z" fill="#29aae8" />
        <path d="m16 16 4-3 9 7v9H16z" fill="#5b76d8" />
        <path d="M1 20 10 11l18 18H1z" fill="#153e86" />
        <circle cx="19.500" cy="7.500" r="2.800" fill="#fff" />
      </>
    ),
  },
  {
    name: "Chrome",
    art: (
      <>
        <path d="M15 15 3 8a14 14 0 0 1 24.500 1z" fill="#dc4b3e" />
        <path d="M15 15h-3L3 8a14 14 0 0 0 10 21l5-9z" fill="#1fa15d" />
        <path d="M15 9h12.600A14 14 0 0 1 14 29l7-11z" fill="#ffcd40" />
        <circle cx="15" cy="15" r="6.500" fill="#fff" />
        <circle cx="15" cy="15" r="5.200" fill="#4688f1" />
      </>
    ),
  },
  {
    name: "联想",
    art: (
      <>
        <circle cx="15" cy="15" r="14.500" fill="#2f6bf6" />
        <path d="M9 7h5v10l7 2v3H9z" fill="#fff" />
      </>
    ),
  },
  {
    name: "Internet Explorer",
    art: (
      <>
        <path d="M24 21a9.500 9.500 0 1 1 .8-5H9" stroke="#5cd2f8" strokeWidth="5" />
        <path d="M7 26c-6 4-6-2-1-9C12 8 24-1 28 3c1 1 1 3-1 6" stroke="#f5c518" strokeWidth="2" />
      </>
    ),
  },
  {
    name: "Microsoft Store",
    art: (
      <>
        <path d="M8 10V2q0-1.500 1.500-1.500h12Q23 .5 23 2v8" stroke="#ddd" strokeWidth="3" />
        <path d="M1 9h29v21H1z" fill="#f0f0f0" />
        <path d="M10 14h5v5h-5z" fill="#f25022" />
        <path d="M16 14h5v5h-5z" fill="#7fba00" />
        <path d="M10 20h5v5h-5z" fill="#00a4ef" />
        <path d="M16 20h5v5h-5z" fill="#ffb900" />
      </>
    ),
  },
  {
    name: "2345",
    state: "open",
    art: (
      <>
        <circle cx="15" cy="15" r="14.500" fill="#27b4f5" />
        <path
          d="M8.500 12c2-6 12-6 12.500-1.500.3 3.500-7 3.500-11.500 7M21.500 18c-2 6-12 6-12.500 1.500-.3-3.500 7-3.500 11.500-7"
          stroke="#fff"
          strokeWidth="3"
        />
      </>
    ),
  },
  {
    name: "QQ 浏览器",
    art: (
      <>
        <circle cx="15" cy="15" r="11" stroke="#2196f9" strokeWidth="6" />
        <path d="M4 15a11 11 0 0 0 9 11" stroke="#bfe4ff" strokeWidth="6" />
        <path d="M16 29a4 4 0 0 1 0-8 6 6 0 0 1 11-1c4 1 4 9-1 9z" fill="#fff" />
      </>
    ),
  },
  {
    name: "Excel",
    state: "active",
    art: (
      <>
        <path d="M8 1h11v9H8z" fill="#21a366" />
        <path d="M19 1h11v7H19z" fill="#33c481" />
        <path d="M8 8h22v7H8z" fill="#21a366" />
        <path d="M8 15h22v7H8z" fill="#107c41" />
        <path d="M8 22h22v7H8z" fill="#185c37" />
        <path d="M1 7h15v15H1z" fill="#107c41" />
        <path d="m6 10.500 5 8M11 10.500l-5 8" stroke="#fff" strokeWidth="2" />
      </>
    ),
  },
];

const Taskbar = () => (
  <footer className="flex items-stretch shrink-0 h-[50px] text-white bg-linear-to-r from-[#1d302b] via-[#20362f] via-65% to-[#28382f]">
    <button className="flex items-center justify-center w-[60px]" aria-label="开始">
      <Icon w={20} h={20}>
        <path d="M0 3l8.500-1.200v7.700H0zM9.500 1.600 20 0v9.500H9.500zM0 10.500h8.500v7.700L0 17zM9.500 10.500H20V20L9.500 18.500z" fill="#fff" />
      </Icon>
    </button>
    <button className="flex items-center justify-center w-[60px] mr-[3px]" aria-label="任务视图">
      <Icon w={22} h={20}>
        <path d="M1.500 0v3.500h12V0M1.500 6h12v9h-12zM1.500 20v-3.500h12V20M19.500 0v20" stroke="#fff" strokeWidth="1.200" />
        <path d="M18 6h3.500v3.500H18z" fill="#fff" />
      </Icon>
    </button>
    {TASKS.map(({ name, state, art }) => (
      <button
        key={name}
        className={`flex items-center justify-center w-[62px] ${state === "active" ? "bg-[#4d5b53]" : ""}`}
        aria-label={name}
      >
        <span
          className={`flex items-center justify-center h-full border-y-3 border-t-transparent ${
            state ? "border-b-[#76b9ed]" : "border-b-transparent"
          } ${state === "active" ? "w-full" : "w-[51px]"}`}
        >
          <svg width="30" height="30" viewBox="0 0 30 30" fill="none" aria-hidden="true">
            {art}
          </svg>
        </span>
      </button>
    ))}
    <div className="flex items-center ml-auto">
      <button className="mr-[89px] mb-1" aria-label="搜狗输入法">
        <SogouLogo size={20} />
      </button>
      <button className="flex items-center gap-2.5 text-[18px] whitespace-pre">
        <Icon w={28} h={20}>
          <path d="M6 19a6 6 0 0 1 0-11C7-1 18-1 20 4c5 0 8 4 7 9v6z" fill="#bfe3fa" />
          <path d="M20 4c5 0 7 3 7 7-2-3-4-4-7-3-1-3-3-5-6-6 2-1 5 0 6 2z" fill="#4d9fe0" />
        </Icon>
        34°C  空气优 37
      </button>
      <button className="ml-5" aria-label="显示隐藏的图标">
        <Icon w={16} h={10}>
          <path d="m1 9 7-7 7 7" stroke="#fff" strokeWidth="1.400" />
        </Icon>
      </button>
      <button className="ml-[45px]" aria-label="网络">
        <Icon w={16} h={16}>
          <path d="M.7 15C1 7 7 1 15 1M4 15C4.500 9 9 5 15 4.500M7.500 15c.5-4 4-7 7.500-7" stroke="#ccd2cf" strokeWidth="1.200" />
          <circle cx="13.500" cy="13.500" r="1.700" fill="#fff" />
        </Icon>
      </button>
      <button className="ml-4" aria-label="Windows Ink 工作区">
        <Icon w={22} h={20}>
          <path d="M7 17 15 2c1-2 4-1 3 1l-8 14-3 2zM6 12c-3-1-5 1-5 3 0 4 6 3 9 0s5-8 9-6c2 2 0 4-2 3" stroke="#fff" strokeWidth="1.200" />
        </Icon>
      </button>
      <button className="w-[110px] text-base leading-[23px] text-center">
        13:17
        <br />
        2021/9/25
      </button>
      <button className="ml-1.5 pt-1" aria-label="通知">
        <Icon w={20} h={20}>
          <path d="M0 0h20v17h-7l-3 3-3-3H0z" fill="#fff" />
          <path d="M4 4.500h12M4 8.500h12M4 12.500h8" stroke="#223029" strokeWidth="1.200" />
        </Icon>
      </button>
      <div className="w-px h-[50px] ml-[25px] mr-[5px] bg-[#6b7771]" />
    </div>
  </footer>
);

export default function App() {
  return (
    <div className="relative flex flex-col h-screen overflow-hidden bg-[#f3f2f1] text-[15px] text-[#444] font-['Noto_Sans','Noto_Sans_CJK_SC',sans-serif]">
      <TitleBar />
      <div className="shrink-0 bg-[#f3f2f1]">
        <TabRow />
        <Ribbon />
      </div>
      <FormulaBar />
      <Sheet />
      <SheetTabs />
      <StatusBar />
      <Taskbar />
      <Gauge />
      <ImeBar />
      <Watermark />
    </div>
  );
}
